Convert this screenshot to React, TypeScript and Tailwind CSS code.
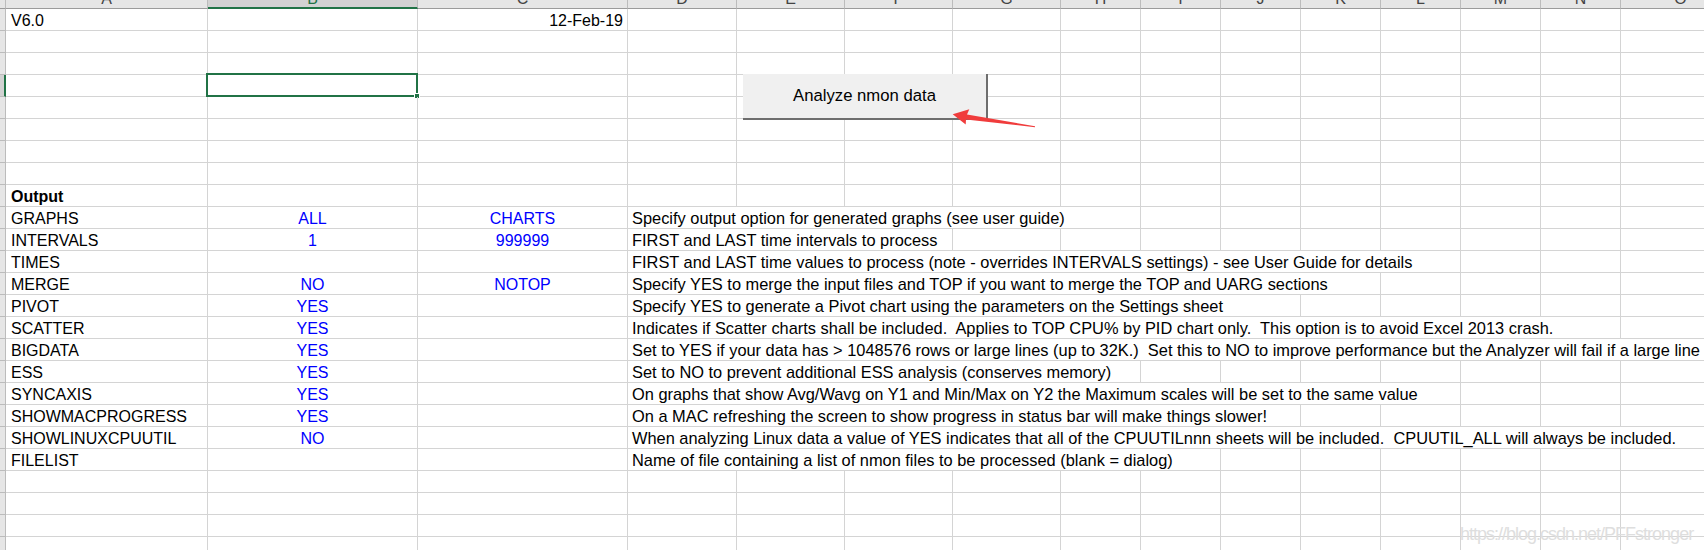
import React from 'react';

type Row = {
  a?: string;
  b?: string;
  c?: string;
  d?: string;
  span?: number;
  bold?: boolean;
  cRight?: boolean;
};

const letters = ['A', 'B', 'C', 'D', 'E', 'F', 'G', 'H', 'I', 'J', 'K', 'L', 'M', 'N', 'O'];

// how many columns the overflowing description text covers (D..O)
const spanClass: Record<number, string> = {
  1: 'col-span-1',
  3: 'col-span-3',
  5: 'col-span-5',
  6: 'col-span-6',
  7: 'col-span-7',
  8: 'col-span-8',
  9: 'col-span-9',
  11: 'col-span-11',
  12: 'col-span-12',
};

const rows: Row[] = [
  { a: 'V6.0', c: '12-Feb-19', cRight: true },
  {},
  {},
  {},
  {},
  {},
  {},
  {},
  { a: 'Output', bold: true },
  { a: 'GRAPHS', b: 'ALL', c: 'CHARTS', d: 'Specify output option for generated graphs (see user guide)', span: 5 },
  { a: 'INTERVALS', b: '1', c: '999999', d: 'FIRST and LAST time intervals to process', span: 3 },
  { a: 'TIMES', d: 'FIRST and LAST time values to process (note - overrides INTERVALS settings) - see User Guide for details', span: 9 },
  { a: 'MERGE', b: 'NO', c: 'NOTOP', d: 'Specify YES to merge the input files and TOP if you want to merge the TOP and UARG sections', span: 8 },
  { a: 'PIVOT', b: 'YES', d: 'Specify YES to generate a Pivot chart using the parameters on the Settings sheet', span: 7 },
  { a: 'SCATTER', b: 'YES', d: 'Indicates if Scatter charts shall be included.\u00a0 Applies to TOP CPU% by PID chart only.\u00a0 This option is to avoid Excel 2013 crash.', span: 11 },
  { a: 'BIGDATA', b: 'YES', d: 'Set to YES if your data has > 1048576 rows or large lines (up to 32K.)\u00a0 Set this to NO to improve performance but the Analyzer will fail if a large line is found', span: 12 },
  { a: 'ESS', b: 'YES', d: 'Set to NO to prevent additional ESS analysis (conserves memory)', span: 5 },
  { a: 'SYNCAXIS', b: 'YES', d: 'On graphs that show Avg/Wavg on Y1 and Min/Max on Y2 the Maximum scales will be set to the same value', span: 9 },
  { a: 'SHOWMACPROGRESS', b: 'YES', d: 'On a MAC refreshing the screen to show progress in status bar will make things slower!', span: 7 },
  { a: 'SHOWLINUXCPUUTIL', b: 'NO', d: 'When analyzing Linux data a value of YES indicates that all of the CPUUTILnnn sheets will be included.\u00a0 CPUUTIL_ALL will always be included.', span: 12 },
  { a: 'FILELIST', d: 'Name of file containing a list of nmon files to be processed (blank = dialog)', span: 6 },
  {},
  {},
  {},
  {},
];

const cell = 'h-[22px] border-r border-b border-[#d4d4d4] leading-[23px] whitespace-nowrap';

const App: React.FC = () => {
  return (
    <div className="relative w-[1704px] h-[550px] overflow-hidden bg-white text-[16px] text-black font-['Liberation_Sans',Arial,sans-serif]">
      <div className="grid grid-cols-[6px_202px_210px_210px_109px_108px_108px_108px_80px_80px_80px_80px_80px_80px_80px_120px] grid-rows-[9px_repeat(25,22px)]">
        {/* column headers */}
        <div className="h-[9px] bg-[#e6e6e6] border-r border-b border-r-[#bcbcbc] border-b-[#9b9b9b]" />
        {letters.map((l) =>
          l === 'B' ? (
            <div
              key={l}
              className="h-[9px] overflow-hidden bg-[#d2d2d2] border-r border-r-[#bcbcbc] border-b-2 border-b-[#217346] flex justify-center items-end text-[#217346]"
            >
              <span className="leading-none">{l}</span>
            </div>
          ) : (
            <div
              key={l}
              className="h-[9px] overflow-hidden bg-[#e6e6e6] border-r border-b border-r-[#bcbcbc] border-b-[#9b9b9b] flex justify-center items-end text-[#444]"
            >
              <span className="leading-none mb-[1px]">{l}</span>
            </div>
          )
        )}

        {rows.map((r, i) => {
          const selected = i === 3;
          const rest = r.span ? 12 - r.span : 12;
          return (
            <React.Fragment key={i}>
              {selected ? (
                <div className="h-[22px] bg-[#d2d2d2] border-b border-b-[#bcbcbc] border-r-2 border-r-[#217346]" />
              ) : (
                <div className="h-[22px] bg-[#e6e6e6] border-r border-b border-[#bcbcbc]" />
              )}
              <div className={`${cell} px-[5px] ${r.bold ? 'font-bold' : ''}`}>{r.a}</div>
              <div className={`${cell} relative text-center text-[#0000ff]`}>
                {r.b}
                {selected && (
                  <div className="absolute -left-[2px] -top-[2px] w-[212px] h-[24px] border-2 border-[#217346]">
                    <div className="absolute -right-[4px] -bottom-[4px] w-[6px] h-[6px] bg-[#217346] border border-white" />
                  </div>
                )}
              </div>
              <div className={`${cell} px-[4px] ${r.cRight ? 'text-right' : 'text-center text-[#0000ff]'}`}>{r.c}</div>
              {r.span ? (
                <div className={`${cell} ${spanClass[r.span]} px-[4px] text-[16.4px] overflow-visible`}>{r.d}</div>
              ) : null}
              {Array.from({ length: rest }).map((_, k) => (
                <div key={k} className={cell} />
              ))}
            </React.Fragment>
          );
        })}
      </div>

      {/* macro button placed on the sheet */}
      <div className="absolute left-[743px] top-[74px] w-[245px] h-[46px] bg-[#f0f0f0] border-r-2 border-b-2 border-[#6e6e6e] flex items-center justify-center text-[16.7px] text-black">
        Analyze nmon data
      </div>

      {/* red annotation arrow */}
      <svg className="absolute left-[940px] top-[100px]" width="100" height="35" viewBox="0 0 100 35">
        <polygon
          points="12.7,14.3 29.3,9.3 27,14.6 95,26.2 95,27.2 26,19.6 25.7,24.5"
          fill="#f03c3c"
        />
      </svg>

      {/* blog watermark */}
      <div className="absolute left-[1460px] top-[522px] text-[18px] tracking-[-1px] leading-[24px] text-[#dedede]">
        https://blog.csdn.net/PFFstronger
      </div>
    </div>
  );
};

export default App;
